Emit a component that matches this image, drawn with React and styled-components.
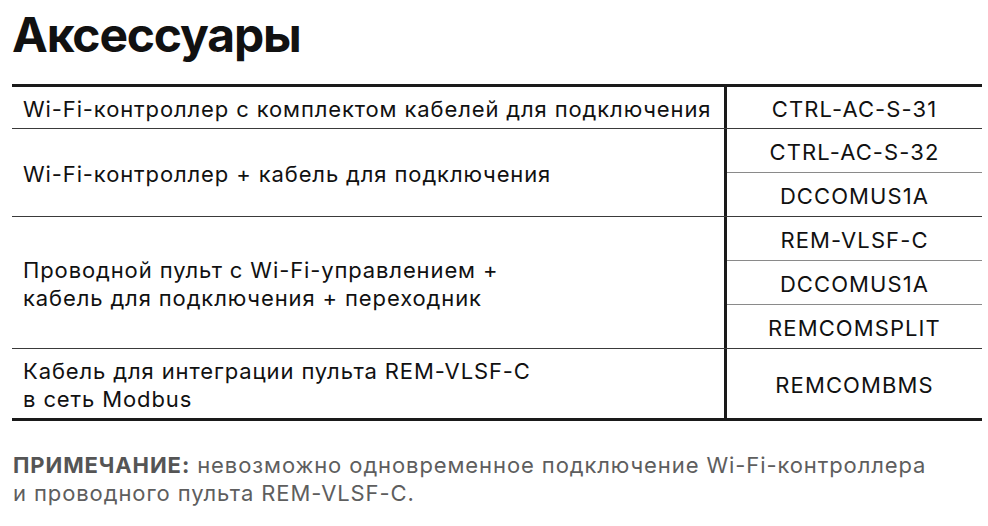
import React from "react";
import styled, { createGlobalStyle } from "styled-components";

const Global = createGlobalStyle`
  html, body { margin: 0; padding: 0; background: #ffffff; }
  body { font-family: Inter, "Noto Sans", sans-serif; color: #111; }
`;

const Page = styled.div`
  padding: 6px 6px 0 12px;
  width: 970px;
`;

const Title = styled.h1`
  margin: 0;
  font-size: 48px;
  line-height: 58px;
  font-weight: 700;
  letter-spacing: -1.2px;
  color: #111;
`;

const Table = styled.div`
  margin-top: 20px;
  border-top: 3px solid #1a1a1a;
  border-bottom: 3px solid #1a1a1a;
  display: flex;
  flex-direction: column;
`;

const Group = styled.div`
  display: flex;
  & + & { border-top: 1px solid #3a3a3a; }
`;

const Label = styled.div`
  box-sizing: border-box;
  width: 715px;
  padding: 2px 0 0 11px;
  border-right: 3px solid #1a1a1a;
  display: flex;
  align-items: center;
  font-size: 22px;
  line-height: 28px;
  letter-spacing: 0.88px;
  color: #111;
`;

const Codes = styled.div`
  flex: 1;
  display: flex;
  flex-direction: column;
`;

const Code = styled.div`
  box-sizing: content-box;
  height: ${p => p.$h - 2}px;
  padding-top: 2px;
  display: flex;
  align-items: center;
  justify-content: center;
  font-size: 22px;
  letter-spacing: 1.1px;
  color: #111;
  border-top: ${p => (p.$first ? "none" : "1px solid #8a8a8a")};
`;

const Note = styled.p`
  margin: 30px 0 0 1px;
  font-size: 22px;
  line-height: 28px;
  letter-spacing: 0.9px;
  color: #5e5e5e;
  b { font-weight: 700; color: #555; letter-spacing: 0.9px; }
`;

const groups = [
  { label: ["Wi-Fi-контроллер с комплектом кабелей для подключения"], codes: ["CTRL-AC-S-31"], h: 41 },
  { label: ["Wi-Fi-контроллер + кабель для подключения"], codes: ["CTRL-AC-S-32", "DCCOMUS1A"], h: 43 },
  { label: ["Проводной пульт с Wi-Fi-управлением +", "кабель для подключения + переходник"], codes: ["REM-VLSF-C", "DCCOMUS1A", "REMCOMSPLIT"], h: 43 },
  { label: ["Кабель для интеграции пульта REM-VLSF-C", "в сеть Modbus"], codes: ["REMCOMBMS"], h: 69 },
];

export default function App() {
  return (
    <Page>
      <Global />
      <Title>Аксессуары</Title>
      <Table>
        {groups.map((g, i) => (
          <Group key={i}>
            <Label>
              <div>
                {g.label.map((l, j) => (
                  <React.Fragment key={j}>
                    {j > 0 && <br />}
                    {l}
                  </React.Fragment>
                ))}
              </div>
            </Label>
            <Codes>
              {g.codes.map((c, j) => (
                <Code key={j} $h={g.h} $first={j === 0}>{c}</Code>
              ))}
            </Codes>
          </Group>
        ))}
      </Table>
      <Note>
        <b>ПРИМЕЧАНИЕ:</b> невозможно одновременное подключение Wi-Fi-контроллера
        <br />
        и проводного пульта REM-VLSF-C.
      </Note>
    </Page>
  );
}
